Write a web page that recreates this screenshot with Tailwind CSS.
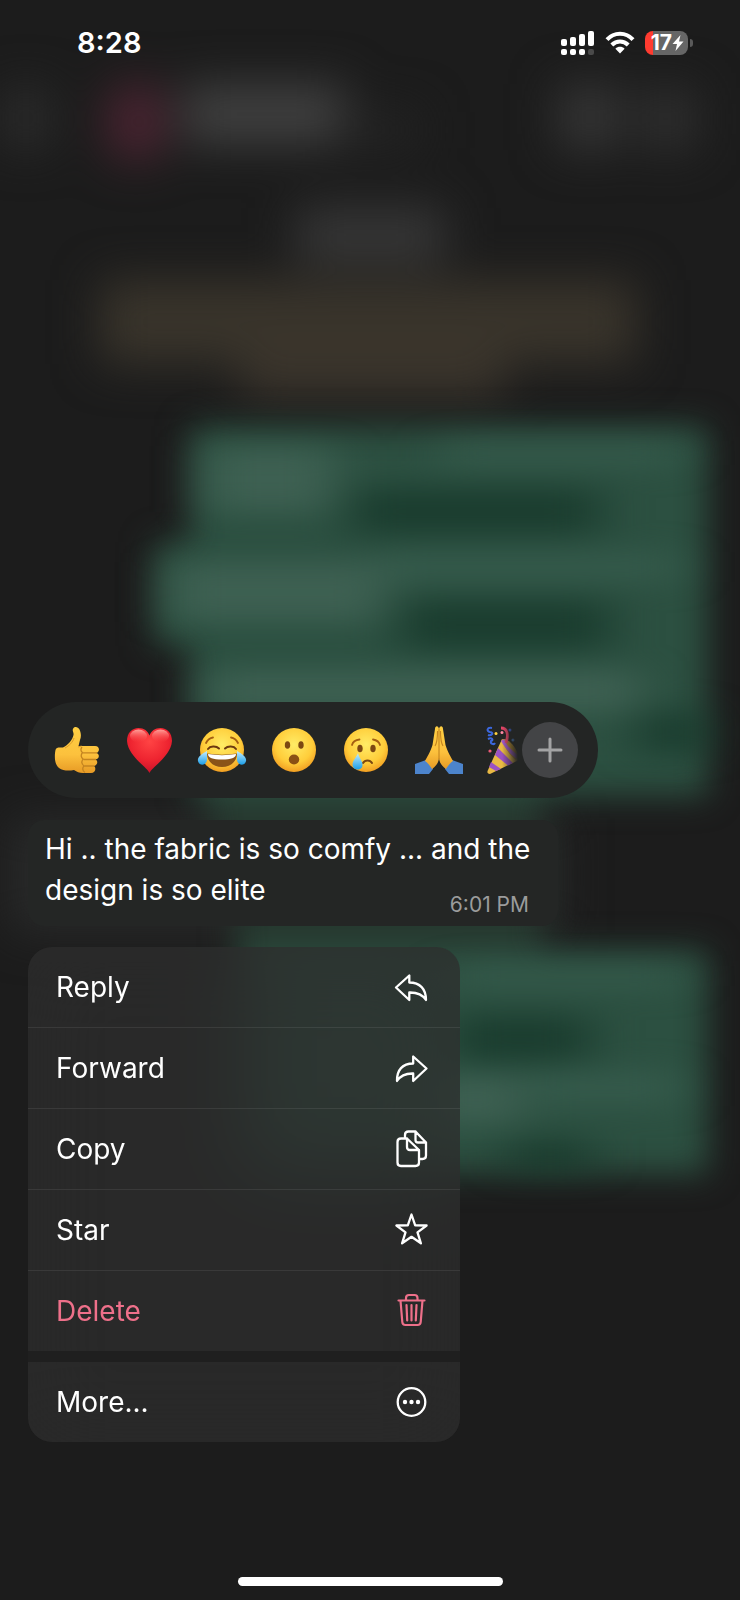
<!DOCTYPE html>
<html lang="en">
<head>
<meta charset="utf-8">
<meta name="viewport" content="width=device-width, initial-scale=1">
<title>Message actions</title>
<script src="https://cdn.jsdelivr.net/npm/@tailwindcss/browser@4"></script>
</head>
<body class="relative flex min-h-screen flex-col overflow-x-hidden bg-[#1c1c1c] font-['Inter','Noto_Sans',sans-serif] text-white">

<!-- Blurred conversation behind the overlay -->
<svg class="absolute inset-0 h-full w-full" viewBox="0 0 740 1600" preserveAspectRatio="none" aria-hidden="true">
  <defs>
    <filter id="blur" filterUnits="userSpaceOnUse" x="-60" y="-60" width="860" height="1720" color-interpolation-filters="sRGB"><feGaussianBlur stdDeviation="16"/></filter>
    <filter id="blurWide" filterUnits="userSpaceOnUse" x="-60" y="-60" width="860" height="1720" color-interpolation-filters="sRGB"><feGaussianBlur stdDeviation="23"/></filter>
    <filter id="blurTint" filterUnits="userSpaceOnUse" x="-60" y="-60" width="860" height="1720" color-interpolation-filters="sRGB"><feGaussianBlur stdDeviation="24 14"/></filter>
  </defs>
  <rect width="740" height="1600" fill="#1c1c1c"/>
  <g filter="url(#blurWide)">
    <rect x="108" y="84" width="56" height="76" rx="20" fill="#4c2432"/>
    <rect x="182" y="84" width="164" height="60" fill="#404040"/>
    <rect x="340" y="110" width="80" height="40" fill="#232323"/>
    <rect x="0" y="88" width="52" height="60" fill="#2b2b2b"/>
    <rect x="558" y="84" width="62" height="66" fill="#353535"/>
    <rect x="640" y="88" width="56" height="62" fill="#2f2f2f"/>
    <rect x="296" y="208" width="150" height="54" fill="#373737"/>
    <rect x="100" y="280" width="536" height="84" fill="#39342b"/>
    <rect x="240" y="340" width="264" height="58" fill="#3b352c"/>
    <rect x="10" y="818" width="550" height="114" fill="#292a2a"/>
  </g>
  <g filter="url(#blur)">
    <path d="M210 780H540V960H235V860H210Z" fill="#26382f"/>
    <path d="M190 426H708V796H190V646H154V542H190Z" fill="#2c5041"/>
    <path d="M240 950H708V1174H240Z" fill="#2c5041"/>
  </g>
  <g filter="url(#blurTint)">
    <path d="M205 446H335V512H205ZM170 562H385V622H170ZM205 670H640V712H205ZM430 1075H520V1125H430Z" fill="#47695b" fill-opacity=".65"/>
    <path d="M440 440H680V466H440ZM380 552H680V582H380ZM450 964H680V988H450ZM530 1070H680V1106H530Z" fill="#3b6152" fill-opacity=".6"/>
    <path d="M350 488H600V535H350ZM400 600H610V650H400ZM640 710H706V755H640ZM455 1015H590V1062H455ZM510 1140H590V1172H510Z" fill="#16382a" fill-opacity=".8"/>
  </g>
</svg>

<header class="relative flex h-[86px] items-center justify-between pr-[47px] pl-[77px]">
  <time class="text-[29px] leading-9 font-semibold">8:28</time>
  <div class="flex items-center gap-[10px]">
    <svg class="h-6 w-[34px]" viewBox="0 0 34 24" fill="#fff" aria-label="Signal">
      <rect x="0" y="8" width="6" height="7" rx="2"/><rect x="9" y="6" width="6" height="9" rx="2"/><rect x="18" y="3" width="6" height="12" rx="2"/><rect x="27" y="0" width="6" height="15" rx="2"/>
      <rect x="0" y="18" width="6" height="6" rx="2"/><rect x="9" y="18" width="6" height="6" rx="2"/><rect x="18" y="18" width="6" height="6" rx="2"/><rect x="27" y="18" width="6" height="6" rx="2" fill="#4a4a4a"/>
    </svg>
    <svg class="h-6 w-[30px]" viewBox="0 0 30 24" fill="none" stroke="#fff" stroke-width="4" aria-label="Wi-Fi">
      <path d="M2 8.700C9 .900 21 .900 28 8.700"/><path d="M6.800 14C11.500 9.200 18.500 9.200 23.200 14"/><path d="M15 22.500 10.400 17.700C13 15.200 17 15.200 19.600 17.700Z" fill="#fff" stroke="none"/>
    </svg>
    <div class="flex items-center gap-[2px]">
      <div class="flex h-6 w-[43px] items-center justify-end overflow-hidden rounded-lg bg-linear-to-r from-[#ff3b30] from-18% to-[#666] to-18% pr-1">
        <span class="text-[21px] leading-6 font-bold">17</span>
        <svg class="h-4 w-3" viewBox="0 0 12 16" fill="#fff" aria-hidden="true"><path d="M8.500 0 .5 9H5L3.500 16 11.500 6.500H7Z"/></svg>
      </div>
      <div class="h-2 w-[3px] rounded-r-full bg-[#5a5a5a]"></div>
    </div>
  </div>
</header>

<main class="relative mt-[616px] flex flex-col items-start px-7">
  <div class="flex h-24 w-[570px] max-w-full items-center rounded-full bg-[#232524] pr-5 pl-[26px]" role="toolbar" aria-label="Reactions">
    <div class="mr-1 flex min-w-0 flex-1 gap-6 overflow-hidden [mask-image:linear-gradient(to_right,#000_calc(100%_-_16px),transparent)]">
      <button class="shrink-0" aria-label="Thumbs up">
        <svg class="size-12" viewBox="0 0 48 48" aria-hidden="true">
          <defs><linearGradient id="skin" x1="0" y1="0" x2="0" y2="1"><stop offset="0" stop-color="#ffcf42"/><stop offset=".6" stop-color="#fcc13d"/><stop offset="1" stop-color="#e79a25"/></linearGradient></defs>
          <path d="M19 3C20 0 24 .5 25.500 3.500 27 7 27.500 10 26 14L24.500 20H41C46 20 46 26 42.500 27 46 28 45.500 33 41.500 33.500 44.500 35 43.500 39.500 40 40 42.500 42 41.500 47 37 47H29C25 47 23 46 20 44 15 45 9 45 5 42 0 38 .5 29 1.500 24 2 21 5 21.500 9 21.500 14 19 18.500 14 19.500 9 20 6 18 5 19 3Z" fill="url(#skin)"/>
          <path d="M28 21C26.500 23 26.500 25 28.500 26.500 26.500 29 27 31.500 29 33 27 36 28 38.500 30 40 28 42 28.500 45 31 46.500M29 26.800H43M29.500 33.500H42M30.500 40H40" fill="none" stroke="#c48420" stroke-width="1.300"/>
          <path d="M24 21 27.500 20M11 22C15 20 19 16 20 12" fill="none" stroke="#dc9928" stroke-width="1"/>
        </svg>
      </button>
      <button class="shrink-0" aria-label="Heart">
        <svg class="size-12" viewBox="0 0 48 48" aria-hidden="true">
          <defs><radialGradient id="heart" cx=".5" cy=".3" r=".7"><stop offset="0" stop-color="#ff4444"/><stop offset=".6" stop-color="#ee2430"/><stop offset="1" stop-color="#c9122a"/></radialGradient><linearGradient id="heartGloss" x1="0" y1="0" x2="0" y2="1"><stop offset="0" stop-color="#ffa29b"/><stop offset="1" stop-color="#ff4545" stop-opacity="0"/></linearGradient></defs>
          <path d="M23.500 47C21 41 2 30 1 15 1 7 6 2 12.500 2 18 2 22 5 23.500 9.500 25 5 29 2 34.500 2 41 2 46 7 46 15 45 30 26 41 23.500 47Z" fill="url(#heart)"/>
          <ellipse cx="12.500" cy="10" rx="8.500" ry="6.500" fill="url(#heartGloss)"/><ellipse cx="34.500" cy="10" rx="8.500" ry="6.500" fill="url(#heartGloss)"/>
        </svg>
      </button>
      <button class="shrink-0" aria-label="Tears of joy">
        <svg class="size-12 overflow-visible" viewBox="0 0 48 48" aria-hidden="true">
          <defs>
            <radialGradient id="face" cx=".5" cy=".38" r=".64"><stop offset="0" stop-color="#ffec66"/><stop offset=".65" stop-color="#ffcd3a"/><stop offset="1" stop-color="#f09a20"/></radialGradient>
            <linearGradient id="tear" x1="0" y1="0" x2="0" y2="1"><stop offset="0" stop-color="#c4edff"/><stop offset="1" stop-color="#1c9fe8"/></linearGradient>
          </defs>
          <circle cx="24" cy="24" r="22" fill="url(#face)"/>
          <path d="M8 17C10 13 12 12 15 11.500M40 17C38 13 36 12 33 11.500" fill="none" stroke="#a45f12" stroke-width="1.800" stroke-linecap="round"/>
          <path d="M10 23C12 20 18 19.500 21 22.500M38 23C36 20 30 19.500 27 22.500" fill="none" stroke="#6d3910" stroke-width="2" stroke-linecap="round"/>
          <path d="M9 27.500C19 29 29 29 39 27.500 39 36 32 41 24 41S9 36 9 27.500Z" fill="#8a5318"/><path d="M10 28C19 29.500 29 29.500 38 28 38 32 33 33.500 24 33.500S10 32 10 28Z" fill="#fff"/>
          <path d="M9 25C4 28-1 31 0 35 1 40 8 40 9 34Z" fill="url(#tear)"/><path d="M39 25C44 28 49 31 48 35 47 40 40 40 39 34Z" fill="url(#tear)"/>
        </svg>
      </button>
      <button class="shrink-0" aria-label="Surprised">
        <svg class="size-12" viewBox="0 0 48 48" aria-hidden="true">
          <circle cx="24" cy="24" r="22" fill="url(#face)"/>
          <ellipse cx="17.500" cy="19" rx="2.700" ry="3.800" fill="#7c4812"/><ellipse cx="31" cy="19" rx="2.700" ry="3.800" fill="#7c4812"/><ellipse cx="24" cy="33.500" rx="5.200" ry="5" fill="#8a5014"/>
        </svg>
      </button>
      <button class="shrink-0" aria-label="Crying">
        <svg class="size-12" viewBox="0 0 48 48" aria-hidden="true">
          <circle cx="24" cy="24" r="22" fill="url(#face)"/>
          <path d="M10 19C11 15 14 14 17.500 13.500M38 19C37 15 34 14 31 13.500" fill="none" stroke="#a45f12" stroke-width="1.800" stroke-linecap="round"/>
          <ellipse cx="18" cy="22.500" rx="2.700" ry="3.800" fill="#7c4812"/><ellipse cx="31" cy="22.500" rx="2.700" ry="3.800" fill="#7c4812"/>
          <path d="M21 37C23 33.500 28 33.500 30 37" fill="none" stroke="#7c4812" stroke-width="2" stroke-linecap="round"/>
          <path d="M16 27C14 32 10.500 34.500 10.500 39 11 45 20.500 45 20.500 39 20.500 34.500 17 32 16 27Z" fill="url(#tear)"/>
        </svg>
      </button>
      <button class="shrink-0" aria-label="Folded hands">
        <svg class="size-12 overflow-visible" viewBox="0 0 48 48" aria-hidden="true">
          <path d="M1 38 12 34C16 36 19 39 19 43L15 48H1ZM49 38 38 34C34 36 31 39 31 43L35 48H49Z" fill="#4c84cc"/>
          <path d="M25 3C24-1 21 0 21 3L18.500 19C16 27 13 31 11 35 14 37 17 41 18 43 22 40 24.500 37 25 32Z" fill="url(#skin)"/>
          <path d="M25 3C26-1 29 0 29 3L31.500 19C34 27 37 31 39 35 36 37 33 41 32 43 28 40 25.500 37 25 32Z" fill="url(#skin)"/>
          <path d="M25 3V33M21 20C23 17 23.500 10 23.500 5M29 20C27 17 26.500 10 26.500 5" fill="none" stroke="#c48420" stroke-width="1.100"/>
        </svg>
      </button>
      <button class="shrink-0" aria-label="Party popper">
        <svg class="size-12" viewBox="0 0 48 48" aria-hidden="true">
          <path d="M16 13C22 12 32 24 33 34L4 48C1 48 1 46 2 44Z" fill="#e9b944"/>
          <path d="M12 22 27 37 22 39.500 9 29ZM5 36 15 43 10 45 3 41Z" fill="#9a52c4"/>
          <path d="M16 13C22 12 29 20 32 28L30 34C24 30 18 21 16 13Z" fill="#b98c28"/>
          <path d="M15 15C19 22 24 28 31 33L32 29C26 25 21 20 18 13Z" fill="#a35bcb"/>
          <path d="M6 2C1 1 0 5 4 6 9 7 5 10 2 9M2 13C6 11 8 14 5 15 4 18 8 19 9 17" fill="none" stroke="#3b67de" stroke-width="2"/>
          <path d="M15 2C21 2 23 8 20 17" fill="none" stroke="#e54567" stroke-width="2.800"/>
          <circle cx="10" cy="7.500" r="1.500" fill="#ffd23f"/><circle cx="16" cy="6.500" r="1.500" fill="#ff8aa5"/><circle cx="24" cy="4" r="1.500" fill="#3b67de"/><circle cx="27" cy="14" r="1.500" fill="#4d8ce8"/><circle cx="4" cy="25" r="1.600" fill="#ec5a78"/>
        </svg>
      </button>
    </div>
    <button class="flex size-14 shrink-0 items-center justify-center rounded-full bg-[#434446]" aria-label="More reactions">
      <svg class="size-7" viewBox="0 0 28 28" fill="none" stroke="#a3a3a4" stroke-width="3" stroke-linecap="round" aria-hidden="true"><path d="M14 3V25M3 14H25"/></svg>
    </button>
  </div>

  <article class="mt-[22px] w-[530px] max-w-full rounded-2xl bg-[#242625] pt-[9px] pr-5 pb-[15px] pl-[17px]">
    <p class="text-[28px] leading-[41px]">Hi .. the fabric is so comfy ... and the design is so elite<time class="float-right mt-[23px] mr-[9px] -mb-4 text-[21px] leading-6 text-[#9b9c9c]">6:01 PM</time></p>
  </article>

  <div class="mt-[21px] w-[432px] max-w-full overflow-hidden rounded-3xl text-[28px] leading-9 backdrop-blur-2xl" role="menu">
    <div class="divide-y divide-white/8 bg-[#2d2d2d]/75">
      <button class="flex h-[81px] w-full items-center justify-between pr-[31px] pl-7" role="menuitem">Reply
        <svg class="size-9" viewBox="0 0 36 36" fill="none" stroke="currentColor" stroke-width="2.300" stroke-linejoin="round" stroke-linecap="round" aria-hidden="true"><path d="M3 18.500 16.300 6.500V13.500C27 13.500 33 20 33 31 29.500 25.500 24 23.300 16.300 23.500V31Z"/></svg>
      </button>
      <button class="flex h-[81px] w-full items-center justify-between pr-[31px] pl-7" role="menuitem">Forward
        <svg class="size-9" viewBox="0 0 36 36" fill="none" stroke="currentColor" stroke-width="2.300" stroke-linejoin="round" stroke-linecap="round" aria-hidden="true"><path d="M33.500 18.500 20.200 6.500V13.500C9.500 13.500 3.700 20 4 31 7.500 25.500 12.500 23.300 20.200 23.500V31Z"/></svg>
      </button>
      <button class="flex h-[81px] w-full items-center justify-between pr-[31px] pl-7" role="menuitem">Copy
        <svg class="size-9 overflow-visible" viewBox="0 0 36 36" fill="none" stroke="currentColor" stroke-width="2.300" stroke-linejoin="round" stroke-linecap="round" aria-hidden="true"><path d="M14 7.500H8Q4.500 7.500 4.500 11V31.500Q4.500 35 8 35H22.500Q26 35 26 31.500V19ZM14 7.500V16Q14 19 17 19H26M12 7V4Q12 .500 15.500 .500H22.500L33 11.500V24.500Q33 28 29.500 28H26.500M22.500 .500V9Q22.500 11.500 25 11.500H33"/></svg>
      </button>
      <button class="flex h-[81px] w-full items-center justify-between pr-[31px] pl-7" role="menuitem">Star
        <svg class="size-9" viewBox="0 0 36 36" fill="none" stroke="currentColor" stroke-width="2.300" stroke-linejoin="round" aria-hidden="true"><path d="M18.500 2.500 22.200 13.300 33.600 13.500 24.500 20.300 27.900 31.300 18.500 24.800 9.100 31.300 12.500 20.300 3.400 13.500 14.800 13.300Z"/></svg>
      </button>
      <button class="flex h-20 w-full items-center justify-between pr-[31px] pl-7 text-[#ee708a]" role="menuitem">Delete
        <svg class="size-9" viewBox="0 0 36 36" fill="none" stroke="currentColor" stroke-width="2.200" stroke-linejoin="round" stroke-linecap="round" aria-hidden="true"><path d="M5.500 7.500H31.500M13 7V5Q13 2 16 2H21.500Q24.500 2 24.500 5V7M7.500 7.500 9.300 29Q9.500 32 12.500 32H24.500Q27.500 32 27.700 29L29.500 7.500M13.500 12 14.200 27.500M18.500 12V27.500M23.500 12 22.800 27.500"/></svg>
      </button>
    </div>
    <div class="h-[11px] bg-[#212121]/80"></div>
    <button class="flex h-20 w-full items-center justify-between bg-[#2d2d2d]/75 pr-[31px] pl-7" role="menuitem">More...
      <svg class="size-9" viewBox="0 0 36 36" fill="none" stroke="currentColor" stroke-width="2.300" aria-hidden="true"><circle cx="18.500" cy="18" r="13.800"/><g fill="currentColor" stroke="none"><circle cx="12" cy="18" r="2.200"/><circle cx="18.500" cy="18" r="2.200"/><circle cx="25" cy="18" r="2.200"/></g></svg>
    </button>
  </div>
</main>

<footer class="relative mt-auto flex justify-center pt-8 pb-[14px]"><div class="h-[9px] w-[265px] rounded-full bg-white"></div></footer>
</body>
</html>
